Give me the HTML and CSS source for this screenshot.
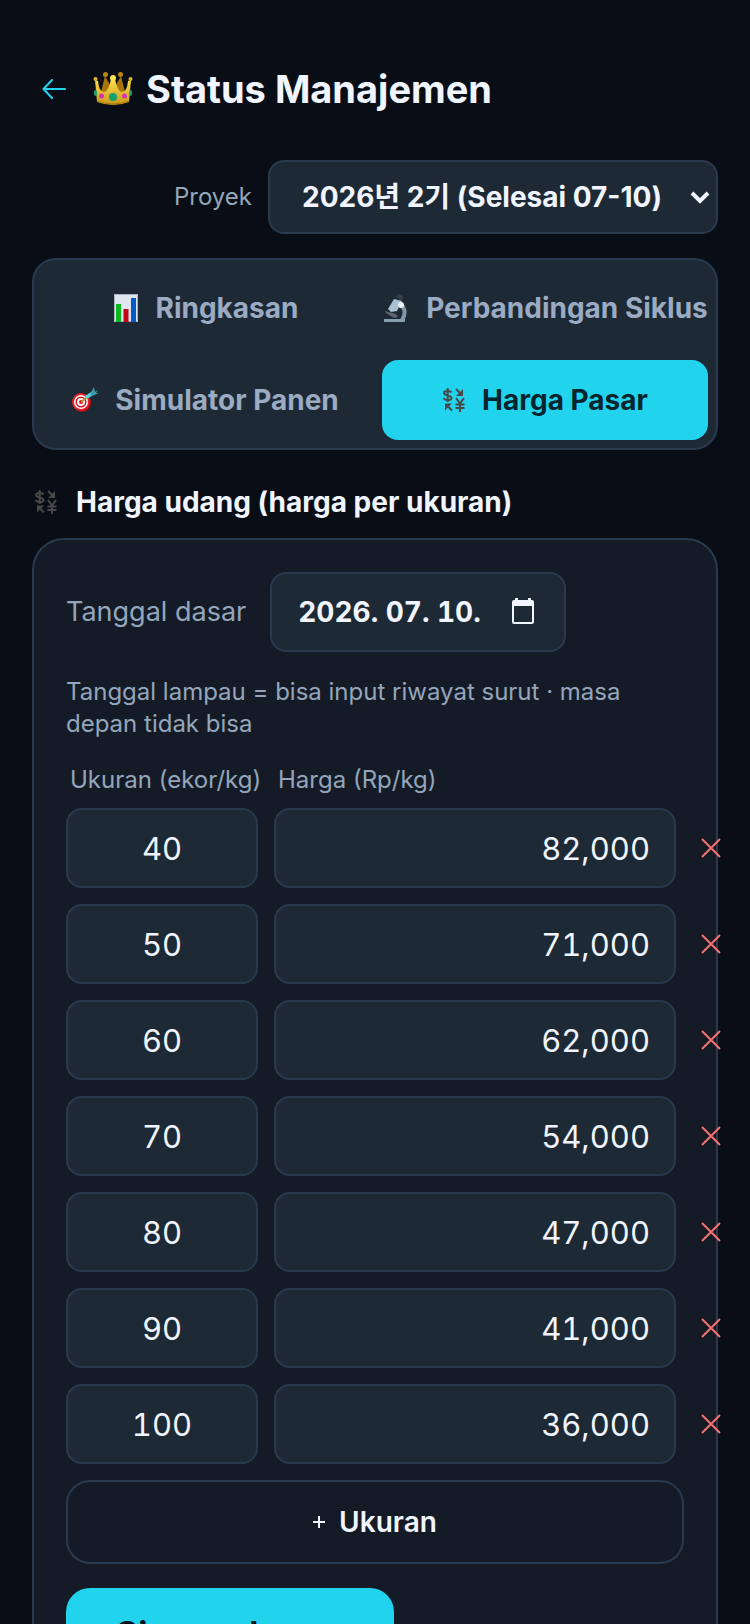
FILE: index.html
```html
<!DOCTYPE html>
<html lang="id">
<head>
    <meta charset="utf-8">
    <meta name="viewport" content="width=device-width, initial-scale=1">
    <title>Status Manajemen</title>
    <link rel="stylesheet" href="styles.css">
</head>
<body>
<svg class="defs" width="0" height="0">
    <symbol id="exchange" viewBox="0 0 24 24">
        <g fill="none" stroke="currentColor" stroke-width="2">
            <path d="M9.500 4.500C8.500 2.500 2 2 2 5s7.500 2 7.500 5S2.500 12.500 1.500 10M5.700 0v14"/>
            <path d="M14 10l4 5.500L22 10M18 15v9M13.500 16.500h9M13.500 20h9"/>
            <path d="M14 1l5 5M10 22.500l-5-5"/>
        </g>
        <path fill="currentColor" d="M21 1v7h-7zM3 15.500h7l-7 7z"/>
    </symbol>
    <symbol id="remove" viewBox="0 0 20 20">
        <path d="M1 1l18 18M19 1L1 19" fill="none" stroke="currentColor" stroke-width="2"/>
    </symbol>
</svg>
<div class="page">
    <header class="topbar">
        <a class="back" href="#" aria-label="Kembali">
            <svg width="24" height="20" viewBox="0 0 24 20"><path d="M10 1L1.500 10l8.500 9M2 10h21" fill="none" stroke="currentColor" stroke-width="2" stroke-linecap="round" stroke-linejoin="round"/></svg>
        </a>
        <h1>
            <svg class="crown" width="40" height="36" viewBox="0 0 40 36">
                <defs>
                    <linearGradient id="gold" x1="0" y1="0" x2="0" y2="1">
                        <stop offset="0" stop-color="#ffe04a"/>
                        <stop offset="1" stop-color="#c9971c"/>
                    </linearGradient>
                </defs>
                <path d="M7 25L12 5l8 14 8-14 5 20z" fill="#a87408"/>
                <circle cx="12.500" cy="3.500" r="2.500" fill="#b98611"/>
                <circle cx="27.500" cy="3.500" r="2.500" fill="#b98611"/>
                <path d="M2 9l2 22q16 6 32 0l2-22-3 1q-1 11-6 11-5-1-7-13h-4q-2 12-7 13-5 0-6-11z" fill="url(#gold)"/>
                <circle cx="2.500" cy="8" r="2" fill="#e3b52b"/>
                <circle cx="37.500" cy="8" r="2" fill="#e3b52b"/>
                <circle cx="20" cy="7" r="3" fill="#ffe552"/>
                <path d="M4 30q16 6 32 0" fill="none" stroke="#a87912"/>
                <ellipse cx="2.500" cy="22" rx="1.500" ry="3" fill="#14a06f"/>
                <ellipse cx="37.500" cy="22" rx="1.500" ry="3" fill="#14a06f"/>
                <circle cx="20" cy="26" r="4" fill="#14a06f"/>
                <circle cx="8.500" cy="25" r="2.500" fill="#d531b2"/>
                <circle cx="31.500" cy="25" r="2.500" fill="#d531b2"/>
            </svg>
            Status Manajemen
        </h1>
    </header>

    <div class="project">
        <label for="project">Proyek</label>
        <div class="select">
            <select id="project">
                <option>2026년 2기 (Selesai 07-10)</option>
            </select>
            <svg class="chevron" width="20" height="14" viewBox="0 0 20 14"><path d="M2 3l8 8 8-8" fill="none" stroke="currentColor" stroke-width="4"/></svg>
        </div>
    </div>

    <nav class="tabs">
        <button type="button">
            <svg width="28" height="28" viewBox="0 0 28 28">
                <path fill="#dfe6f0" d="M2 0h24v28H2z"/>
                <path fill="none" stroke="#a9b3c2" d="M2.500.500h23v27h-23z"/>
                <path fill="#08b81c" d="M4 10h5v18H4z"/>
                <path fill="#c00914" d="M11.500 15h5v13h-5z"/>
                <path fill="#0658c2" d="M19 4h5v24h-5z"/>
            </svg>
            Ringkasan
        </button>
        <button type="button">
            <svg width="28" height="28" viewBox="0 0 28 28">
                <path d="M18 9q8 8 2 17" fill="none" stroke="#8197a5" stroke-width="4"/>
                <path d="M12 5l8 2-5 10-6 1-3-3z" fill="#a9c0d0"/>
                <path d="M14 3l2-3 5 2-1 4z" fill="#37414b"/>
                <path d="M3 17l11 3 2 3-4 1-8-5z" fill="#59656f"/>
                <circle cx="19" cy="11" r="3" fill="#edf3f7"/>
                <path d="M2 25h21v3H2z" fill="#88a0ad"/>
            </svg>
            Perbandingan Siklus
        </button>
        <button type="button">
            <svg width="28" height="28" viewBox="0 0 28 28">
                <circle cx="11" cy="17" r="9" fill="#a60d13"/>
                <circle cx="10" cy="16" r="9" fill="#ed1c24"/>
                <circle cx="10" cy="16" r="7" fill="#fff"/>
                <circle cx="10" cy="16" r="5.500" fill="#d7131b"/>
                <circle cx="10" cy="16" r="4" fill="#fff"/>
                <circle cx="10" cy="16" r="2" fill="#d7131b"/>
                <path d="M10 16l8-6" stroke="#b98b30" stroke-width="2"/>
                <path d="M14 10l6-4 2 3-6 4z" fill="#55d3da"/>
                <path d="M19 8l4-7 1 5 3-2-2 3h3l-7 3z" fill="#3b9da9"/>
            </svg>
            Simulator Panen
        </button>
        <button type="button" class="active">
            <svg class="exchange" width="24" height="24"><use href="#exchange"/></svg>
            Harga Pasar
        </button>
    </nav>

    <h2>
        <svg class="exchange" width="24" height="24"><use href="#exchange"/></svg>
        Harga udang (harga per ukuran)
    </h2>

    <form class="card">
        <div class="date-row">
            <label for="date">Tanggal dasar</label>
            <div class="date">
                <input id="date" type="text" value="2026. 07. 10.">
                <svg class="calendar" width="22" height="26" viewBox="0 0 22 26">
                    <path fill="currentColor" fill-rule="evenodd" d="M3 0h3v2h10V0h3v2h1q2 0 2 2v20q0 2-2 2H2q-2 0-2-2V4q0-2 2-2h1zM2 8v16h18V8z"/>
                </svg>
            </div>
        </div>
        <p class="note">Tanggal lampau = bisa input riwayat surut · masa depan tidak bisa</p>

        <div class="prices">
            <div class="row head">
                <span>Ukuran (ekor/kg)</span>
                <span>Harga (Rp/kg)</span>
            </div>
            <div class="row">
                <input class="size" aria-label="Ukuran" value="40">
                <input class="price" aria-label="Harga" value="82,000">
                <button type="button" class="remove" aria-label="Hapus"><svg width="20" height="20"><use href="#remove"/></svg></button>
            </div>
            <div class="row">
                <input class="size" aria-label="Ukuran" value="50">
                <input class="price" aria-label="Harga" value="71,000">
                <button type="button" class="remove" aria-label="Hapus"><svg width="20" height="20"><use href="#remove"/></svg></button>
            </div>
            <div class="row">
                <input class="size" aria-label="Ukuran" value="60">
                <input class="price" aria-label="Harga" value="62,000">
                <button type="button" class="remove" aria-label="Hapus"><svg width="20" height="20"><use href="#remove"/></svg></button>
            </div>
            <div class="row">
                <input class="size" aria-label="Ukuran" value="70">
                <input class="price" aria-label="Harga" value="54,000">
                <button type="button" class="remove" aria-label="Hapus"><svg width="20" height="20"><use href="#remove"/></svg></button>
            </div>
            <div class="row">
                <input class="size" aria-label="Ukuran" value="80">
                <input class="price" aria-label="Harga" value="47,000">
                <button type="button" class="remove" aria-label="Hapus"><svg width="20" height="20"><use href="#remove"/></svg></button>
            </div>
            <div class="row">
                <input class="size" aria-label="Ukuran" value="90">
                <input class="price" aria-label="Harga" value="41,000">
                <button type="button" class="remove" aria-label="Hapus"><svg width="20" height="20"><use href="#remove"/></svg></button>
            </div>
            <div class="row">
                <input class="size" aria-label="Ukuran" value="100">
                <input class="price" aria-label="Harga" value="36,000">
                <button type="button" class="remove" aria-label="Hapus"><svg width="20" height="20"><use href="#remove"/></svg></button>
            </div>
        </div>

        <button type="button" class="add">
            <svg width="12" height="12" viewBox="0 0 12 12"><path d="M6 0v12M0 6h12" stroke="currentColor" stroke-width="2"/></svg>
            Ukuran
        </button>
        <button type="submit" class="save">Simpan harga</button>
    </form>
</div>
</body>
</html>
```
FILE: styles.css
```css
* {
    box-sizing: border-box;
}
body {
    margin: 0;
    background: #090d15;
    color: #f1f5ff;
    font-family: Inter, "Noto Sans CJK KR", sans-serif;
    font-size: 28px;
    line-height: 32px;
}
button, input, select {
    font: inherit;
    color: inherit;
    margin: 0;
}
button {
    cursor: pointer;
}
svg {
    flex: none;
}
.defs {
    position: absolute;
}
.page {
    height: 100vh;
    overflow: hidden;
    padding: 56px 32px 0;
}
.topbar {
    display: flex;
    align-items: center;
    gap: 27px;
    height: 66px;
    padding-left: 10px;
}
.back {
    display: flex;
    color: #22d3ee;
}
h1 {
    display: flex;
    align-items: center;
    gap: 13px;
    margin: 0;
    font-size: 38px;
    line-height: 48px;
    font-weight: 700;
}

/* project picker */
.project {
    display: flex;
    justify-content: flex-end;
    align-items: center;
    gap: 16px;
    margin-top: 38px;
}
.project label {
    color: #94a6bb;
    font-size: 24px;
}
.select {
    position: relative;
    width: 450px;
}
.select select {
    appearance: none;
    width: 100%;
    height: 74px;
    padding: 0 32px;
    background: #1e2936;
    border: 2px solid #2a3a4e;
    border-radius: 16px;
    font-weight: 700;
}
.chevron {
    position: absolute;
    right: 8px;
    top: 30px;
    pointer-events: none;
}

/* tabs */
.tabs {
    display: grid;
    grid-template-columns: 1fr 1fr;
    gap: 12px 14px;
    margin-top: 24px;
    padding: 8px;
    background: #1e2936;
    border: 2px solid #2a3a4e;
    border-radius: 24px;
}
.tabs button {
    display: flex;
    justify-content: center;
    align-items: center;
    gap: 16px;
    height: 80px;
    padding: 0;
    background: none;
    border: 0;
    border-radius: 16px;
    color: #9aabc2;
    font-weight: 700;
    white-space: nowrap;
}
.tabs button.active {
    background: #22d3ee;
    color: #04252d;
}
.exchange {
    color: #484848;
}
h2 {
    display: flex;
    align-items: center;
    gap: 18px;
    margin: 36px 0 20px;
    padding-left: 2px;
    font-size: 28px;
    line-height: 32px;
    font-weight: 700;
}

/* price form */
.card {
    padding: 32px;
    background: #151b26;
    border: 2px solid #2a3a4e;
    border-radius: 32px;
}
.date-row {
    display: flex;
    align-items: center;
    gap: 24px;
    color: #94a6bb;
}
.date-row label {
    font-size: 27px;
}
.date {
    position: relative;
    width: 296px;
    color: #f1f5ff;
}
.date input {
    width: 100%;
    padding: 0 26px;
    font-weight: 700;
    font-variant-numeric: tabular-nums;
}
.calendar {
    position: absolute;
    right: 32px;
    top: 26px;
}
.card input {
    height: 80px;
    background: #1e2936;
    border: 2px solid #2a3a4e;
    border-radius: 16px;
}
.note {
    margin: 24px 0;
    color: #94a6bb;
    font-size: 24px;
}
.prices {
    display: grid;
    gap: 16px;
    margin-right: -46px;
}
.row {
    display: grid;
    grid-template-columns: 192px 1fr 38px;
    gap: 16px;
}
.row input {
    width: 100%;
    min-width: 0;
    padding: 0 24px;
    font-size: 31px;
    font-variant-numeric: tabular-nums;
}
.row .size {
    text-align: center;
}
.row .price {
    text-align: right;
}
.head {
    margin-bottom: -4px;
    color: #94a6bb;
    font-size: 24px;
}
.head span {
    padding-left: 4px;
    white-space: nowrap;
}
.remove {
    display: flex;
    justify-content: center;
    align-items: center;
    padding: 0;
    background: none;
    border: 0;
    color: #f87171;
}
.add {
    display: flex;
    justify-content: center;
    align-items: center;
    gap: 14px;
    width: 100%;
    height: 84px;
    margin-top: 16px;
    background: none;
    border: 2px solid #2a3a4e;
    border-radius: 24px;
    font-weight: 600;
}
.save {
    height: 92px;
    margin-top: 24px;
    padding: 0 50px;
    background: #22d3ee;
    border: 0;
    border-radius: 24px;
    color: #04121a;
    font-size: 34px;
    font-weight: 700;
}
```
